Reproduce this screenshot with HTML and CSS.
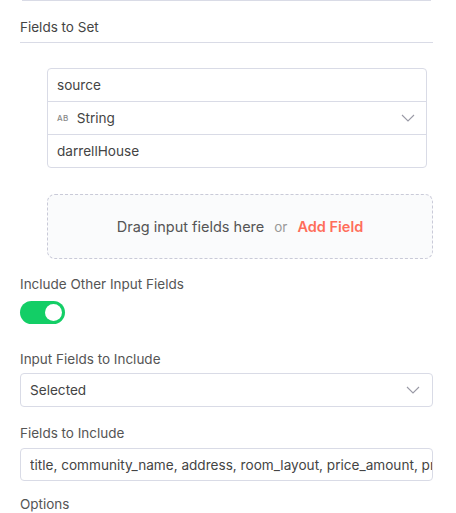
FILE: index.html
```html
<!DOCTYPE html>
<html>
<head>
<meta charset="utf-8">
<link rel="stylesheet" href="styles.css">
</head>
<body>
<div class="panel">
  <div class="top-rule"></div>
  <div class="section-title">Fields to Set</div>

  <div class="assign">
    <div class="row">source</div>
    <div class="row row-type">
      <span class="ab">AB</span>
      <span class="type-name">String</span>
      <svg class="chev" width="14" height="8" viewBox="0 0 14 8"><path d="M1 1 L7 7 L13 1" fill="none" stroke="#9a9aa6" stroke-width="1.1"/></svg>
    </div>
    <div class="row">darrellHouse</div>
  </div>

  <div class="dropzone">
    <span class="drag">Drag input fields here</span>
    <span class="or">or</span>
    <span class="add">Add Field</span>
  </div>

  <div class="label label-include">Include Other Input Fields</div>
  <div class="toggle"><span class="knob"></span></div>

  <div class="label label-input">Input Fields to Include</div>
  <div class="select">
    <span>Selected</span>
    <svg class="chev" width="14" height="8" viewBox="0 0 14 8"><path d="M1 1 L7 7 L13 1" fill="none" stroke="#9a9aa6" stroke-width="1.1"/></svg>
  </div>

  <div class="label label-fields">Fields to Include</div>
  <div class="textinput"><span class="tval">title, community_name, address, room_layout, price_amount, price_unit</span></div>

  <div class="label label-options">Options</div>
</div>
</body>
</html>
```

FILE: styles.css
```css
* { box-sizing: border-box; }
html, body {
  margin: 0;
  padding: 0;
  background: #ffffff;
  font-family: Inter, "Noto Sans", sans-serif;
  color: #555555;
  overflow: hidden;
}
.panel {
  width: 456px;
  height: 513px;
  padding: 0 23px 0 20px;
  display: flex;
  flex-direction: column;
}
.top-rule {
  height: 1px;
  margin: 0 2px 0 2px;
  background: #d9dbe6;
}
.section-title {
  margin-top: 18px;
  font-size: 13.5px;
  line-height: 16px;
  padding-bottom: 7px;
  border-bottom: 1px solid #d9dbe6;
  color: #444;
}
.assign {
  margin: 25px 6px 0 27px;
  border: 1px solid #d9dbe6;
  border-radius: 4px;
  display: flex;
  flex-direction: column;
}
.row {
  height: 33px;
  display: flex;
  align-items: center;
  padding: 0 9px;
  font-size: 13.6px;
  color: #444;
  border-top: 1px solid #d9dbe6;
}
.row:first-child { border-top: none; height: 32px; }
.ab {
  font-size: 8px;
  font-weight: 500;
  color: #888;
  letter-spacing: 0.4px;
  margin-right: 8px;
}
.type-name { flex: 1; }
.row-type .chev { margin-right: 2px; }
.dropzone {
  margin: 26px 0 0 27px;
  height: 65px;
  border: 1px dashed #c9cad8;
  border-radius: 8px;
  background: #fafbfc;
  display: flex;
  align-items: center;
  justify-content: center;
  font-size: 14.5px;
}
.drag { color: #555; }
.or { color: #999; margin: 0 10px; font-size: 13.5px; }
.add { color: #ff6d5a; font-weight: 600; }
.label {
  font-size: 13.5px;
  line-height: 16px;
  color: #555;
}
.label-include { margin-top: 17px; }
.toggle {
  margin-top: 9px;
  width: 45px;
  height: 23px;
  border-radius: 12px;
  background: #13ce66;
  position: relative;
}
.knob {
  position: absolute;
  right: 3px;
  top: 3px;
  width: 17px;
  height: 17px;
  border-radius: 50%;
  background: #fff;
}
.label-input { margin-top: 27px; }
.select {
  margin-top: 6px;
  height: 34px;
  border: 1px solid #d9dbe6;
  border-radius: 4px;
  display: flex;
  align-items: center;
  justify-content: space-between;
  padding: 0 12px 0 9px;
  font-size: 13.6px;
  color: #444;
}
.label-fields { margin-top: 18px; }
.textinput {
  margin-top: 7px;
  height: 33px;
  border: 1px solid #d9dbe6;
  border-radius: 4px;
  display: flex;
  align-items: center;
  padding: 0 0 0 9px;
  font-size: 13.6px;
  color: #444;
  white-space: nowrap;
  overflow: hidden;
}
.tval { overflow: hidden; white-space: nowrap; }
.label-options { margin-top: 15px; }
```
